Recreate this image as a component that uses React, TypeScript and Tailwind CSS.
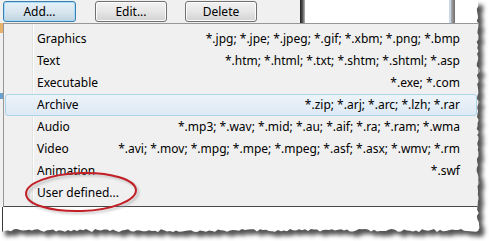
import React from 'react';

const rows = [
  { label: 'Graphics', exts: '*.jpg; *.jpe; *.jpeg; *.gif; *.xbm; *.png; *.bmp' },
  { label: 'Text', exts: '*.htm; *.html; *.txt; *.shtm; *.shtml; *.asp' },
  { label: 'Executable', exts: '*.exe; *.com' },
  { label: 'Archive', exts: '*.zip; *.arj; *.arc; *.lzh; *.rar', active: true },
  { label: 'Audio', exts: '*.mp3; *.wav; *.mid; *.au; *.aif; *.ra; *.ram; *.wma' },
  { label: 'Video', exts: '*.avi; *.mov; *.mpg; *.mpe; *.mpeg; *.asf; *.asx; *.wmv; *.rm' },
  { label: 'Animation', exts: '*.swf' },
  { label: 'User defined...', exts: '' },
];

// jagged "torn paper" outline for the screenshot edge
function tornPath() {
  let seed = 7;
  const rnd = () => {
    seed = (seed * 9301 + 49297) % 233280;
    return seed / 233280;
  };
  const pts: string[] = ['M0 0', 'L478 0'];
  for (let y = 3; y < 231; y += 3) {
    pts.push(`L${(476.5 + rnd() * 3).toFixed(1)} ${y}`);
  }
  pts.push('L478 231');
  for (let x = 476; x > 0; x -= 3) {
    pts.push(`L${x} ${(229 + rnd() * 3).toFixed(1)}`);
  }
  pts.push('L0 230 Z');
  return pts.join(' ');
}

function WinButton({ label, focused }: { label: string; focused?: boolean }) {
  return (
    <div
      className={
        focused
          ? 'flex h-[21px] w-[73px] items-center justify-center rounded-[3px] border border-[#3c7fb1] bg-gradient-to-b from-[#e5f1f9] via-[#d9e6ef] to-[#bfd3e0] shadow-[inset_0_0_0_1px_#a6dcf7]'
          : 'flex h-[21px] w-[72px] items-center justify-center rounded-[3px] border border-[#707070] bg-gradient-to-b from-[#f2f2f2] via-[#e6e6e6] to-[#d2d2d2] shadow-[inset_0_0_0_1px_#fcfcfc]'
      }
    >
      <span className="text-[12px] leading-none text-black">{label}</span>
    </div>
  );
}

export default function App() {
  const torn = tornPath();
  return (
    <div className="relative h-[241px] w-[489px] overflow-hidden bg-white font-['Noto_Sans',sans-serif]">
      <div className="flex flex-col">
        <div className="flex h-[23px]">
          <div className="flex w-[300px] gap-[20px] bg-[#f0f0f0] pl-[3px] pt-[1px]">
            <WinButton label="Add..." focused />
            <div className="-ml-[1px]">
              <WinButton label="Edit..." />
            </div>
            <div className="-ml-[2px]">
              <WinButton label="Delete" />
            </div>
          </div>
          <div className="w-[5px] bg-gradient-to-r from-[#1e1e1e] via-[#555] to-[#b8b8b8]" />
          <div className="w-[144px] bg-white" />
          <div className="w-[2px] bg-[#c9d7e6]" />
          <div className="w-[4px] bg-gradient-to-r from-[#b0b0b0] to-[#6c6c6c]" />
          <div className="flex-1 bg-white" />
        </div>

        <div className="flex">
          <div className="flex w-[3px] flex-col">
            <div className="h-[10px] bg-[#e9b26a]" />
            <div className="h-[60px] bg-[#f0f0f0]" />
            <div className="h-[6px] bg-[#6aa0d0]" />
            <div className="flex-1 bg-[#f0f0f0]" />
          </div>
          <div className="relative h-[184px] w-[476px] border border-[#979797] border-b-[#4a4a4a] bg-[#f0f0f0] px-[1px] pb-[2px] pt-[4px]">
            <div className="absolute bottom-0 left-[28px] top-0 w-[2px] border-l border-[#e2e3e3] bg-white" />
            {rows.map((row) => (
              <div
                key={row.label}
                className={
                  row.active
                    ? 'relative flex h-[22px] items-center justify-between rounded-[3px] border border-[#aed4ea] bg-gradient-to-b from-[#edf4fa] to-[#dde9f4] pl-[31px] pr-[16px] text-[12px] text-black'
                    : 'relative flex h-[22px] items-center justify-between rounded-[3px] border border-transparent pl-[31px] pr-[16px] text-[12px] text-black'
                }
              >
                <span>{row.label}</span>
                <span>{row.exts}</span>
              </div>
            ))}
          </div>
        </div>

        <div className="flex h-[30px]">
          <div className="ml-[2px] w-[1px] bg-[#3a3a3a]" />
          <div className="flex-1 bg-white" />
        </div>
      </div>

      <svg className="absolute left-0 top-0" width="489" height="241" viewBox="0 0 489 241">
        <defs>
          <clipPath id="outside">
            <path d={`M0 0 H489 V241 H0 Z ${torn}`} clipRule="evenodd" />
          </clipPath>
          <filter id="blur" x="-5%" y="-5%" width="110%" height="110%">
            <feGaussianBlur stdDeviation="2" />
          </filter>
          <filter id="soft" x="-20%" y="-40%" width="140%" height="180%">
            <feGaussianBlur stdDeviation="1.2" />
          </filter>
        </defs>
        <g clipPath="url(#outside)">
          <rect width="489" height="241" fill="#ffffff" />
          <path d={torn} transform="translate(5 5)" fill="#555555" filter="url(#blur)" />
        </g>
        <ellipse cx="83" cy="194" rx="55" ry="19" fill="none" stroke="#9a9a9a" strokeWidth="2.5" opacity="0.5" filter="url(#soft)" transform="rotate(-2 83 194)" />
        <ellipse cx="81" cy="192" rx="55" ry="19" fill="none" stroke="#c21f26" strokeWidth="2" transform="rotate(-2 81 192)" />
      </svg>
    </div>
  );
}
